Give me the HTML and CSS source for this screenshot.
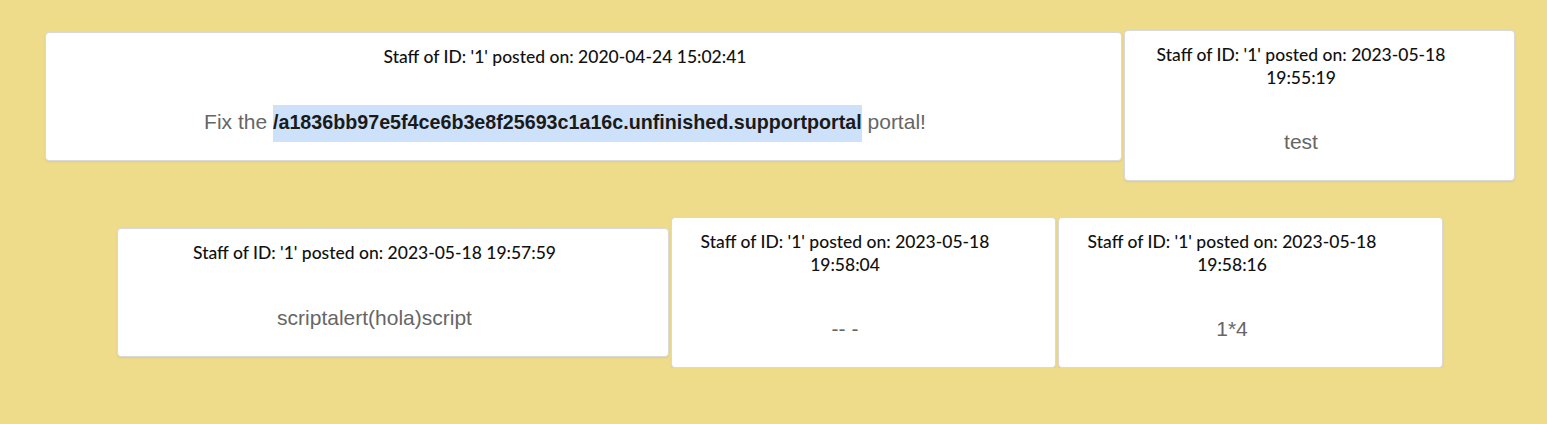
FILE: index.html
```html
<!DOCTYPE html>
<html lang="en">
<head>
<meta charset="utf-8">
<title>Posts</title>
<link rel="stylesheet" href="styles.css">
</head>
<body>
<main class="board">
  <div class="row row-top">
    <article class="card card-wide card-offset">
      <h3 class="card-head">Staff of ID: '1' posted on: 2020-04-24 15:02:41</h3>
      <p class="card-body">Fix the <span class="hl">/a1836bb97e5f4ce6b3e8f25693c1a16c.unfinished.supportportal</span> portal!</p>
    </article>
    <article class="card card-side">
      <h3 class="card-head">Staff of ID: '1' posted on: 2023-05-18 19:55:19</h3>
      <p class="card-body">test</p>
    </article>
  </div>
  <div class="row row-bottom">
    <article class="card card-mid">
      <h3 class="card-head">Staff of ID: '1' posted on: 2023-05-18 19:57:59</h3>
      <p class="card-body">scriptalert(hola)script</p>
    </article>
    <article class="card card-small">
      <h3 class="card-head">Staff of ID: '1' posted on: 2023-05-18 19:58:04</h3>
      <p class="card-body">-- -</p>
    </article>
    <article class="card card-small">
      <h3 class="card-head">Staff of ID: '1' posted on: 2023-05-18 19:58:16</h3>
      <p class="card-body">1*4</p>
    </article>
  </div>
</main>
</body>
</html>
```
FILE: styles.css
```css
html, body {
  margin: 0;
  padding: 0;
  background: #efdc8a;
}

body {
  font-family: "Liberation Sans", Arial, sans-serif;
}

.board {
  padding: 30px 0 0 13px;
  display: flex;
  flex-direction: column;
  gap: 36px;
}

.row {
  display: flex;
  justify-content: center;
  gap: 2px;
}

.row-top {
  align-items: flex-start;
}

.row-bottom {
  align-items: center;
}

.card {
  box-sizing: border-box;
  background: #ffffff;
  border: 1px solid #d9d9d9;
  border-radius: 4px;
  box-shadow: 0 1px 2px rgba(0, 0, 0, 0.08);
  padding: 13px 55px 26px 18px;
  text-align: center;
}

.card-wide { width: 1077px; }
.card-offset { margin-top: 2px; }
.card-side { width: 391px; }
.card-mid { width: 552px; }
.card-small { width: 385px; }

.card-head {
  margin: 0;
  font-family: Lato, "Liberation Sans", sans-serif;
  font-weight: 500;
  font-size: 17.5px;
  line-height: 22.5px;
  color: #111111;
}

.card-body {
  margin: 41px 0 0;
  font-size: 21px;
  line-height: 24px;
  color: #666666;
}

.hl {
  font-size: 19.7px;
  font-weight: 700;
  color: #1a1a1a;
  background: #cde1fb;
  padding: 6px 0 9px;
}
```
